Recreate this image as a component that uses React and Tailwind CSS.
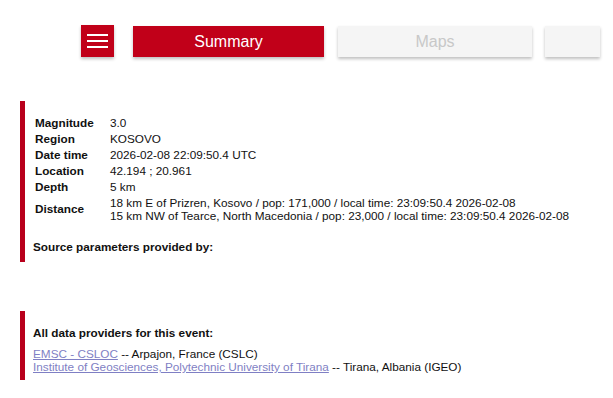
import React from 'react';

const rows = [
  { label: 'Magnitude', value: ['3.0'] },
  { label: 'Region', value: ['KOSOVO'] },
  { label: 'Date time', value: ['2026-02-08 22:09:50.4 UTC'] },
  { label: 'Location', value: ['42.194 ; 20.961'] },
  { label: 'Depth', value: ['5 km'] },
  {
    label: 'Distance',
    value: [
      '18 km E of Prizren, Kosovo / pop: 171,000 / local time: 23:09:50.4 2026-02-08',
      '15 km NW of Tearce, North Macedonia / pop: 23,000 / local time: 23:09:50.4 2026-02-08'
    ]
  }
];

const App = () => {
  return (
    <div className="w-[613px] h-[398px] overflow-hidden bg-white font-['Liberation_Sans',Arial,sans-serif] text-[11.75px] text-[#111]">
      {/* Top tabs */}
      <div className="flex items-start pt-[25px] pl-[81px]">
        <button className="shrink-0 w-[33px] h-[32px] bg-[#c10019] shadow-[0_2px_3px_rgba(0,0,0,0.25)] flex flex-col items-center justify-center gap-[4px]">
          <span className="block w-[21px] h-[2px] bg-white" />
          <span className="block w-[21px] h-[2px] bg-white" />
          <span className="block w-[21px] h-[2px] bg-white" />
        </button>
        <div className="shrink-0 ml-[19px] w-[191px] h-[31px] mt-[1px] bg-[#c10019] text-white text-[16px] flex items-center justify-center shadow-[0_2px_3px_rgba(0,0,0,0.25)]">
          Summary
        </div>
        <div className="shrink-0 ml-[14px] w-[194px] h-[31px] mt-[1px] bg-[#f5f5f5] text-[#c8c8c8] text-[16px] flex items-center justify-center shadow-[0_2px_3px_rgba(0,0,0,0.25)]">
          Maps
        </div>
        <div className="shrink-0 ml-[13px] w-[55px] h-[31px] mt-[1px] bg-[#f5f5f5] shadow-[0_2px_3px_rgba(0,0,0,0.25)]" />
      </div>

      {/* Event summary */}
      <div className="ml-[20px] mt-[44px] h-[161px] border-l-[5px] border-[#b8001c] pl-[8px] pt-[13px]">
        <table className="border-collapse leading-[13px]">
          <tbody>
            {rows.map((row) => (
              <tr key={row.label}>
                <td className="w-[77px] pl-[2px] py-[1.5px] font-bold align-middle">{row.label}</td>
                <td className="py-[1.5px] whitespace-nowrap">
                  {row.value.map((line) => (
                    <div key={line}>{line}</div>
                  ))}
                </td>
              </tr>
            ))}
          </tbody>
        </table>
        <p className="mt-[16px] font-bold leading-[16px]">Source parameters provided by:</p>
      </div>

      {/* Data providers */}
      <div className="ml-[20px] mt-[49px] h-[69px] border-l-[5px] border-[#b8001c] pl-[8px] pt-[14px]">
        <p className="font-bold leading-[16px]">All data providers for this event:</p>
        <div className="mt-[6px] leading-[13px]">
          <div>
            <a className="text-[#7f7fc4] underline">EMSC - CSLOC</a> -- Arpajon, France (CSLC)
          </div>
          <div>
            <a className="text-[#7f7fc4] underline">Institute of Geosciences, Polytechnic University of Tirana</a> -- Tirana, Albania (IGEO)
          </div>
        </div>
      </div>
    </div>
  );
};

export default App;
